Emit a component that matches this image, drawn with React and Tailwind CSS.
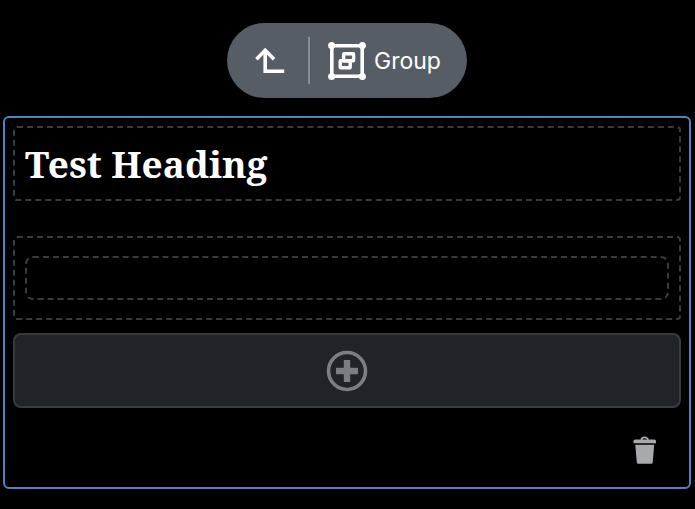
function UpIcon() {
  return (
    <svg width="32" height="32" viewBox="0 0 32 32" fill="none" stroke="#fff" strokeWidth="3.6" aria-hidden="true">
      <path d="M11.2 5V26.2H30.2" />
      <path d="M2.4 14.2L11.2 5.2L20 14.2" />
    </svg>
  );
}

function GroupIcon() {
  return (
    <svg width="38" height="38" viewBox="0 0 38 38" fill="none" stroke="#fff" aria-hidden="true">
      <path d="M3.8 3.8H34.2V34.2H3.8Z" strokeWidth="3.6" />
      <g fill="#fff" stroke="none">
        <circle cx="3.6" cy="3.6" r="3.5" />
        <circle cx="34.4" cy="3.6" r="3.5" />
        <circle cx="3.6" cy="34.4" r="3.5" />
        <circle cx="34.4" cy="34.4" r="3.5" />
      </g>
      <rect x="15.6" y="11.8" width="10" height="7" rx="0.5" strokeWidth="3.4" />
      <rect x="12.2" y="18.8" width="10" height="7" rx="0.5" strokeWidth="3.4" />
    </svg>
  );
}

function AddIcon() {
  return (
    <svg width="42" height="42" viewBox="0 0 42 42" fill="none" stroke="#7b7e83" aria-hidden="true">
      <circle cx="21" cy="21" r="18.5" strokeWidth="3.6" />
      <path d="M21 10V32M10 21H32" strokeWidth="6.4" />
    </svg>
  );
}

function TrashIcon() {
  return (
    <svg width="24" height="28" viewBox="0 0 24 28" fill="#a7a9ad" aria-hidden="true">
      <path d="M8.3 4.2C8.3 0.4 15.1 0.4 15.1 4.2" fill="none" stroke="#a7a9ad" strokeWidth="1.6" />
      <path d="M2 3.6H21.4Q23 3.6 23 5.2V7.2H0.5V5.2Q0.5 3.6 2 3.6Z" />
      <path d="M2.3 8.8H21.2L19.7 26.4Q19.6 27.8 18 27.8H5.5Q4 27.8 3.8 26.4Z" />
    </svg>
  );
}

export default function App() {
  return (
    <main className="flex min-h-screen flex-col bg-black pt-[23px] pr-1 pb-5 pl-[3px] font-[Inter,sans-serif] text-white">
      <div role="toolbar" aria-label="Block" className="mx-auto flex h-[75px] w-60 items-center rounded-full bg-[#575d65] pl-[27px]">
        <button type="button" aria-label="Select parent block">
          <UpIcon />
        </button>
        <div className="ml-[22px] h-[47px] w-0.5 bg-[#868e98]" />
        <button type="button" className="ml-[18px] flex items-center gap-2">
          <GroupIcon />
          <span className="text-[23px] leading-8">Group</span>
        </button>
      </div>

      <section className="mt-[18px] rounded-md border-2 border-[#4e85be] p-2">
        <div className="flex h-[75px] items-center rounded border-2 border-dashed border-[#383c41] px-2.5">
          <h2 className="font-['Noto_Serif','Liberation_Serif',serif] text-[37px] leading-[52px] font-bold">Test Heading</h2>
        </div>
        <div className="mt-[35px] rounded border-2 border-dashed border-[#383c41] px-2.5 py-[18px]">
          <div className="h-11 rounded-lg border-2 border-dashed border-[#383c41]" />
        </div>
        <button
          type="button"
          aria-label="Add block"
          className="mt-[13px] flex h-[75px] w-full items-center justify-center rounded-lg border-2 border-[#383c41] bg-[#202327]"
        >
          <AddIcon />
        </button>
        <div className="flex justify-end pt-7 pr-6 pb-[15px]">
          <button type="button" aria-label="Delete block">
            <TrashIcon />
          </button>
        </div>
      </section>
    </main>
  );
}
